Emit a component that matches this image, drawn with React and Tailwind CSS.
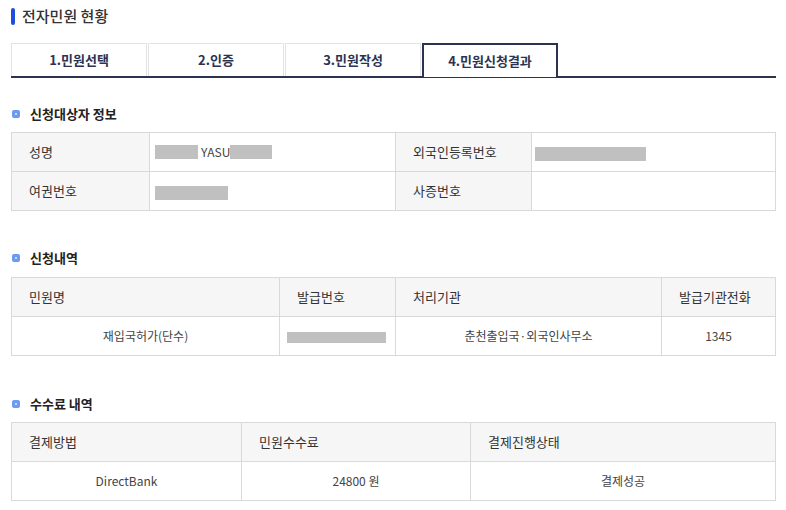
import React from 'react';

const Redact = ({ w, h = 'h-[14px]' }) => (
    <span className={`inline-block align-middle bg-[#c0c0c0] ${w} ${h}`} />
);

const SectionTitle = ({ children }) => (
    <div className="flex items-center h-[20px] gap-[10px]">
        <span className="w-[8px] h-[8px] rounded-[2px] bg-[#6b9cf2] ml-[1px] flex items-center justify-center">
            <span className="w-[2px] h-[2px] bg-white/80 rounded-full" />
        </span>
        <h3 className="text-[13px] font-bold text-[#222]">{children}</h3>
    </div>
);

const tabs = ['1.민원선택', '2.인증', '3.민원작성', '4.민원신청결과'];

const App = () => {
    const th = 'bg-[#f6f6f6] border border-[#d9d9d9] text-left font-normal text-[13px] text-[#333] pl-[17px] h-[39px]';
    const td = 'border border-[#d9d9d9] text-[12px] text-[#444] h-[39px]';

    return (
        <div className="w-[786px] min-h-[510px] bg-white pl-[11px] pr-[10px] pt-[8px]" style={{ fontFamily: '"Noto Sans CJK KR", "Noto Sans", sans-serif' }}>
            <div className="flex items-center gap-[7px] h-[17px]">
                <span className="w-[4px] h-[17px] rounded-[2px] bg-[#1d4fd8]" />
                <h2 className="text-[15px] text-[#333] font-medium">전자민원 현황</h2>
            </div>

            <div className="flex mt-[18px] border-b-2 border-[#2b3350]">
                {tabs.map((t, i) => (
                    <div
                        key={t}
                        className={
                            i === 3
                                ? 'w-[136px] h-[34px] -mb-[2px] border-2 border-b-0 border-[#2b3350] bg-white flex items-center justify-center text-[13px] font-bold text-[#2b3350]'
                                : 'w-[136px] h-[33px] border border-[#e3e3e3] border-b-0 flex items-center justify-center text-[13px] font-bold text-[#2b3350] mr-[1px]'
                        }
                    >
                        {t}
                    </div>
                ))}
            </div>

            <div className="mt-[26px]">
                <SectionTitle>신청대상자 정보</SectionTitle>
                <table className="mt-[8px] w-[765px] table-fixed border-collapse">
                    <colgroup>
                        <col className="w-[138px]" />
                        <col className="w-[246px]" />
                        <col className="w-[136px]" />
                        <col />
                    </colgroup>
                    <tbody>
                        <tr>
                            <th className={th}>성명</th>
                            <td className={`${td} pl-[5px]`}>
                                <span className="flex items-center">
                                    <Redact w="w-[43px]" />
                                    <span className="ml-[3px] text-[#444]">YASU</span>
                                    <Redact w="w-[42px]" />
                                </span>
                            </td>
                            <th className={th}>외국인등록번호</th>
                            <td className={`${td} pl-[3px]`}><Redact w="w-[111px]" /></td>
                        </tr>
                        <tr>
                            <th className={th}>여권번호</th>
                            <td className={`${td} pl-[5px]`}><Redact w="w-[73px]" /></td>
                            <th className={th}>사증번호</th>
                            <td className={td}></td>
                        </tr>
                    </tbody>
                </table>
            </div>

            <div className="mt-[37px]">
                <SectionTitle>신청내역</SectionTitle>
                <table className="mt-[9px] w-[765px] table-fixed border-collapse">
                    <colgroup>
                        <col className="w-[268px]" />
                        <col className="w-[116px]" />
                        <col className="w-[266px]" />
                        <col />
                    </colgroup>
                    <thead>
                        <tr>
                            <th className={th}>민원명</th>
                            <th className={th}>발급번호</th>
                            <th className={th}>처리기관</th>
                            <th className={th}>발급기관전화</th>
                        </tr>
                    </thead>
                    <tbody>
                        <tr>
                            <td className={`${td} text-center`}>재입국허가(단수)</td>
                            <td className={`${td} pl-[7px]`}><Redact w="w-[99px]" h="h-[11px]" /></td>
                            <td className={`${td} text-center`}>춘천출입국·외국인사무소</td>
                            <td className={`${td} text-center`}>1345</td>
                        </tr>
                    </tbody>
                </table>
            </div>

            <div className="mt-[38px]">
                <SectionTitle>수수료 내역</SectionTitle>
                <table className="mt-[8px] w-[765px] table-fixed border-collapse">
                    <colgroup>
                        <col className="w-[230px]" />
                        <col className="w-[229px]" />
                        <col />
                    </colgroup>
                    <thead>
                        <tr>
                            <th className={th}>결제방법</th>
                            <th className={th}>민원수수료</th>
                            <th className={th}>결제진행상태</th>
                        </tr>
                    </thead>
                    <tbody>
                        <tr>
                            <td className={`${td} text-center`}>DirectBank</td>
                            <td className={`${td} text-center`}>24800 원</td>
                            <td className={`${td} text-center`}>결제성공</td>
                        </tr>
                    </tbody>
                </table>
            </div>
        </div>
    );
};

export default App;
